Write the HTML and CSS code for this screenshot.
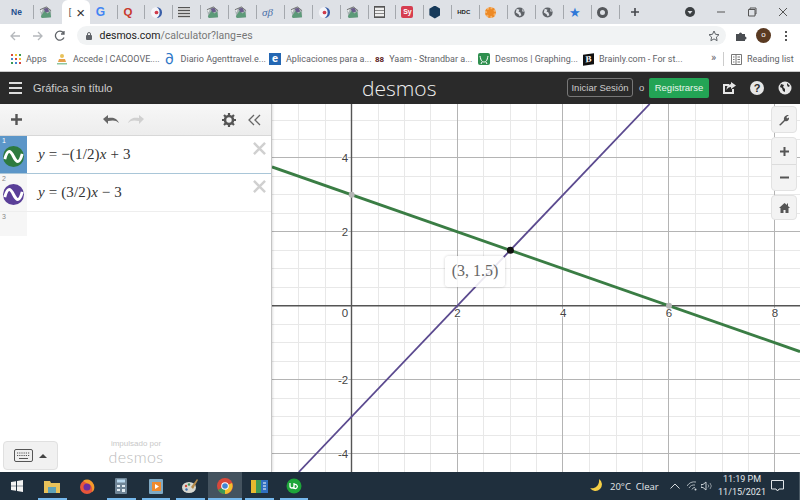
FILE: index.html
```html
<!DOCTYPE html>
<html lang="es">
<head>
<meta charset="UTF-8">
<title>Desmos | Calculadora Gráfica</title>
<link rel="stylesheet" href="styles.css">
</head>
<body>
<svg class="defs" width="0" height="0">
    <symbol id="pic" viewBox="0 0 14 14">
        <polygon points="1,4 8,1 13,5 13,12 3,13" fill="#a9b3b4"/>
        <polygon points="2,11 6,5 9,8 12,6 13,12 3,13" fill="#5c9a78"/>
        <polygon points="5,3 9,2 11,6 7,7" fill="#6a5c8a"/>
        <polygon points="1,4 4,3 3,7" fill="#eceeee"/>
        <path d="M1 4l7-3 5 4" fill="none" stroke="#555" stroke-width="0.8"/>
    </symbol>
    <symbol id="moon" viewBox="0 0 14 14">
        <circle cx="7" cy="7" r="6" fill="#f4f4f8"/>
        <path d="M7 1a6 6 0 0 1 0 12 7 7 0 0 0 0-12z" fill="#3a5fa8"/>
        <path d="M4 2a6 6 0 0 0-1 9 6 6 0 0 1 1-9z" fill="#e08a9a"/>
        <circle cx="7" cy="7" r="2" fill="#d03a4a"/>
    </symbol>
    <symbol id="globe" viewBox="0 0 14 14">
        <circle cx="7" cy="7" r="5.5" fill="#5f6368"/>
        <path d="M4 3l3 1-1 2 2 1 1 3-2 1-1-2-3-2zM10 3l2 3-2 0z" fill="#dee1e6"/>
    </symbol>
    <symbol id="curve" viewBox="0 0 24 24">
        <path d="M2 15c3-11 6-11 10-3s7 8 10-3" fill="none" stroke="#fff" stroke-width="3.4"/>
    </symbol>
    <symbol id="cross" viewBox="0 0 14 14">
        <path d="M1 1l12 12M13 1L1 13" stroke="#d0d0d0" stroke-width="2.6"/>
    </symbol>
</svg>

<div class="tabstrip">
    <div class="tab"><span class="ne">Ne</span></div>
    <div class="tab"><svg class="ico"><use href="#pic"/></svg></div>
    <div class="tab tab-active"><span class="tab-clip">[</span><span class="tab-x">×</span></div>
    <div class="tab"><span class="gg">G</span></div>
    <div class="tab"><span class="qq">Q</span></div>
    <div class="tab"><svg class="ico"><use href="#moon"/></svg></div>
    <div class="tab"><span class="lines"></span></div>
    <div class="tab"><svg class="ico"><use href="#pic"/></svg></div>
    <div class="tab"><svg class="ico"><use href="#pic"/></svg></div>
    <div class="tab"><span class="sigma">σβ</span></div>
    <div class="tab"><svg class="ico"><use href="#pic"/></svg></div>
    <div class="tab"><svg class="ico"><use href="#moon"/></svg></div>
    <div class="tab"><svg class="ico"><use href="#pic"/></svg></div>
    <div class="tab"><span class="grid-ico"></span></div>
    <div class="tab"><span class="sy">Sy</span></div>
    <div class="tab"><span class="hex"></span></div>
    <div class="tab"><span class="hdc">HDC</span></div>
    <div class="tab"><span class="sun"></span></div>
    <div class="tab"><svg class="ico"><use href="#globe"/></svg></div>
    <div class="tab"><svg class="ico"><use href="#globe"/></svg></div>
    <div class="tab"><span class="star">★</span></div>
    <div class="tab"><span class="ring"></span></div>
    <svg class="newtab" width="10" height="10" viewBox="0 0 10 10"><path d="M5 1v8M1 5h8" stroke="#45484d" stroke-width="1.6"/></svg>
    <svg class="tabsearch" width="12" height="12" viewBox="0 0 12 12"><circle cx="6" cy="6" r="5" fill="#3c4043"/><path d="M3.5 5h5L6 8z" fill="#dee1e6"/></svg>
    <div class="winbtns">
        <svg width="10" height="10" viewBox="0 0 10 10"><path d="M1 5h8" stroke="#555" stroke-width="1"/></svg>
        <svg width="10" height="10" viewBox="0 0 10 10"><path d="M1.5 2.5h6.5v6.5h-6.5zM3 2.5v-1.5h6v6h-1" fill="none" stroke="#555"/></svg>
        <svg width="10" height="10" viewBox="0 0 10 10"><path d="M1 1l8 8M9 1l-8 8" stroke="#555"/></svg>
    </div>
</div>

<div class="toolbar">
    <svg class="nav" width="12" height="12" viewBox="0 0 12 12"><path d="M11 6H2M6 2L2 6l4 4" fill="none" stroke="#b5b8bc" stroke-width="1.3"/></svg>
    <svg class="nav" width="12" height="12" viewBox="0 0 12 12"><path d="M1 6h9M6 2l4 4-4 4" fill="none" stroke="#b5b8bc" stroke-width="1.3"/></svg>
    <svg class="nav" width="12" height="12" viewBox="0 0 12 12"><path d="M10 7.5A4.5 4.5 0 1 1 9.5 3M10 1v3H7" fill="none" stroke="#5f6368" stroke-width="1.3"/></svg>
    <div class="omnibox">
        <svg width="8" height="10" viewBox="0 0 8 10"><rect x="1" y="4" width="6" height="5" rx="1" fill="#5f6368"/><path d="M2.5 4V3a1.5 1.5 0 0 1 3 0v1" fill="none" stroke="#5f6368"/></svg>
        <span class="url"><b>desmos.com</b>/calculator?lang=es</span>
        <svg class="omni-star" width="12" height="12" viewBox="0 0 12 12"><path d="M6 1l1.500 3.300 3.500.4-2.600 2.400.7 3.600L6 8.900l-3.100 1.800.7-3.600L1 4.700l3.500-.4z" fill="none" stroke="#5f6368"/></svg>
    </div>
    <svg class="puzzle" width="12" height="12" viewBox="0 0 12 12"><path d="M1 4h3a1.5 1.5 0 0 1 3 0h3v2.500a1.500 1.500 0 0 1 0 3V11H1z" fill="#4a4d51"/></svg>
    <span class="avatar">o</span>
    <span class="kebab"><i></i><i></i><i></i></span>
</div>

<div class="bookmarks">
    <span class="bm bm-apps">
        <svg width="10" height="10" viewBox="0 0 10 10">
            <path d="M0 0h2v2H0z" fill="#d8483b"/><path d="M4 0h2v2H4z" fill="#f1c02e"/><path d="M8 0h2v2H8z" fill="#3a9a55"/>
            <path d="M0 4h2v2H0z" fill="#4285d4"/><path d="M4 4h2v2H4z" fill="#d8483b"/><path d="M8 4h2v2H8z" fill="#f1c02e"/>
            <path d="M0 8h2v2H0z" fill="#3a9a55"/><path d="M4 8h2v2H4z" fill="#4285d4"/><path d="M8 8h2v2H8z" fill="#d8483b"/>
        </svg>Apps</span>
    <span class="bm bm-cacoo">
        <svg width="12" height="12" viewBox="0 0 12 12"><circle cx="6" cy="3" r="2" fill="#e8c25a"/><path d="M3 6h6l1 3H2z" fill="#e8a04a"/><path d="M1 10h10v1.500H1z" fill="#8fc7a0"/></svg>Accede | CACOOVE....</span>
    <span class="bm bm-diario"><span class="diario-ico">∂</span>Diario Agenttravel.e...</span>
    <span class="bm bm-apl"><span class="ie-ico">e</span>Aplicaciones para a...</span>
    <span class="bm bm-yaam"><span class="yaam-ico">88</span>Yaam - Strandbar a...</span>
    <span class="bm bm-desmos">
        <svg width="12" height="12" viewBox="0 0 12 12"><rect width="12" height="12" rx="2" fill="#2f8f4f"/><path d="M2 3c1 5 2 6 4 6s3-1 4-6M4 9l-1 2M8 9l1 2" fill="none" stroke="#fff"/></svg>Desmos | Graphing...</span>
    <span class="bm bm-brainly"><span class="br-ico">B</span>Brainly.com - For st...</span>
    <span class="bm-more">»</span>
    <span class="bm-sep"></span>
    <span class="bm bm-read">
        <svg width="11" height="11" viewBox="0 0 11 11"><path d="M.5.500h10v10H.5zM5 .5v10M2 3h1.500M2 5.500h1.500M2 8h1.500M6.500 3H9M6.500 5.500H9M6.500 8H9" fill="none" stroke="#777"/></svg>Reading list</span>
</div>

<header class="dcg-header">
    <span class="burger"><i></i><i></i><i></i></span>
    <span class="graph-title">Gráfica sin título</span>
    <span class="logo">desmos</span>
    <a class="btn-login">Iniciar Sesión</a>
    <span class="or">o</span>
    <a class="btn-signup">Registrarse</a>
    <svg class="hd-share" width="15" height="14" viewBox="0 0 15 14"><path d="M11 8v4H2V4h5" fill="none" stroke="#e6e6e6" stroke-width="2"/><path d="M9 1l5 3.500L9 8V6C7 6 5.500 7 4.500 9 4.500 6 6 3.500 9 3z" fill="#e6e6e6"/></svg>
    <span class="hd-help">?</span>
    <svg class="hd-globe" width="14" height="14" viewBox="0 0 14 14"><circle cx="7" cy="7" r="6.500" fill="#e6e6e6"/><path d="M3 3l3 1-1 2 2 2 0 3-2-1-1-3-2-1zM9 2l3 3-2 1-1-2z" fill="#2a2a2a"/></svg>
</header>

<main class="calc">
    <aside class="sidebar">
        <div class="side-tools">
            <svg class="t-plus" width="13" height="13" viewBox="0 0 13 13"><path d="M6.500 1v11M1 6.500h11" stroke="#555" stroke-width="2.400"/></svg>
            <svg class="t-undo" width="16" height="10" viewBox="0 0 16 10"><path d="M0 4l5-4v3c5-1 9 0 11 5-3-3-6-3-11-2v3z" fill="#666"/></svg>
            <svg class="t-redo" width="16" height="10" viewBox="0 0 16 10"><path d="M16 4l-5-4v3C6 2 2 3 0 8c3-3 6-3 11-2v3z" fill="#d0d0d0"/></svg>
            <svg class="t-gear" width="14" height="14" viewBox="0 0 14 14"><circle cx="7" cy="7" r="4" fill="none" stroke="#555" stroke-width="2.600"/><path d="M7 0v3M7 11v3M0 7h3M11 7h3M2 2l2 2M10 10l2 2M12 2l-2 2M4 10l-2 2" stroke="#555" stroke-width="2.200"/></svg>
            <svg class="t-hide" width="13" height="12" viewBox="0 0 13 12"><path d="M6 1L1 6l5 5M12 1L7 6l5 5" fill="none" stroke="#666" stroke-width="1.300"/></svg>
        </div>
        <div class="expr expr-active">
            <div class="expr-tab">
                <span class="expr-num">1</span>
                <svg class="expr-ico ico-green" viewBox="0 0 24 24"><use href="#curve"/></svg>
            </div>
            <div class="expr-math"><i>y</i> = −(1/2)<i>x</i> + 3</div>
            <svg class="expr-del" viewBox="0 0 14 14"><use href="#cross"/></svg>
        </div>
        <div class="expr">
            <div class="expr-tab">
                <span class="expr-num">2</span>
                <svg class="expr-ico ico-purple" viewBox="0 0 24 24"><use href="#curve"/></svg>
            </div>
            <div class="expr-math"><i>y</i> = (3/2)<i>x</i> − 3</div>
            <svg class="expr-del" viewBox="0 0 14 14"><use href="#cross"/></svg>
        </div>
        <div class="expr expr-empty">
            <div class="expr-tab"><span class="expr-num">3</span></div>
        </div>
        <div class="side-foot">
            <div class="kbd-btn">
                <svg width="19" height="13" viewBox="0 0 19 13"><rect x="0.500" y="0.500" width="18" height="12" rx="1.500" fill="#eee" stroke="#555"/><path d="M3 4h13M3 6.500h13" stroke="#555" stroke-dasharray="1.200 1"/><path d="M5 9.500h9" stroke="#555"/></svg>
                <span class="kbd-caret"></span>
            </div>
            <div class="powered">
                <span class="powered-by">impulsado por</span>
                <span class="powered-logo">desmos</span>
            </div>
        </div>
    </aside>

    <div class="graph">
        <svg class="plot" width="528" height="368" viewBox="0 0 528 368">
            <path class="grid-minor" d="M26.500 0v368M53.500 0v368M106.500 0v368M132.500 0v368M158.500 0v368M211.500 0v368M238.500 0v368M264.500 0v368M317.500 0v368M344.500 0v368M370.500 0v368M423.500 0v368M450.500 0v368M476.500 0v368M0 16.500h528M0 35.500h528M0 72.500h528M0 90.500h528M0 109.500h528M0 146.500h528M0 164.500h528M0 183.500h528M0 220.500h528M0 238.500h528M0 257.500h528M0 294.500h528M0 312.500h528M0 331.500h528"/>
            <path class="grid-major" d="M185.500 0v368M290.500 0v368M396.500 0v368M502.500 0v368M0 53.500h528M0 127.500h528M0 275.500h528M0 349.500h528"/>
            <path class="axis" d="M79.500 0v368M0 201.700h528"/>
            <g class="tick">
                <text x="73" y="57.500">4</text>
                <text x="73" y="131.500">2</text>
                <text x="73" y="213">0</text>
                <text x="185.500" y="213">2</text>
                <text x="291.300" y="213">4</text>
                <text x="397" y="213">6</text>
                <text x="503" y="213">8</text>
                <text x="71" y="279.500">-2</text>
                <text x="71" y="353.500">-4</text>
            </g>
            <path class="line-purple" d="M377.700 0L26.800 368"/>
            <path class="line-green" d="M0 62.900L528 247.600"/>
            <circle cx="79.700" cy="90.700" r="3" fill="#b5b5b5"/>
            <circle cx="397" cy="201.700" r="3" fill="#b5b5b5"/>
            <circle cx="238.400" cy="146.200" r="3.500" fill="#111"/>
        </svg>
        <div class="point-label">(3, 1.5)</div>
        <div class="gr-tools">
            <div class="gr-btn gr-wrench">
                <svg width="12" height="12" viewBox="0 0 12 12"><path d="M1 11l5-5C5.500 3 7.500 .5 11 1L8.500 3l.5 1.500L11 3.500C11.500 6 9 8 7 7l-4.500 4.500z" fill="#555"/></svg>
            </div>
            <div class="gr-zoom">
                <div class="gr-btn-inner"><svg width="9" height="9" viewBox="0 0 9 9"><path d="M4.500 0v9M0 4.500h9" stroke="#555" stroke-width="2"/></svg></div>
                <div class="gr-btn-inner"><svg width="9" height="9" viewBox="0 0 9 9"><path d="M0 4.500h9" stroke="#555" stroke-width="2"/></svg></div>
            </div>
            <div class="gr-btn gr-home">
                <svg width="11" height="10" viewBox="0 0 11 10"><path d="M5.500 0L0 5h1.500v5h3V7h2v3h3V5H11L9 3V.500H8v1.500z" fill="#555"/></svg>
            </div>
        </div>
    </div>
</main>

<footer class="taskbar">
    <svg class="win" width="12" height="12" viewBox="0 0 12 12"><path d="M0 2l5-.8V5.700H0zM6 1l6-1v5.700H6zM0 6.300h5v4.500L0 10zM6 6.300h6V12l-6-1z" fill="#f2f2f2"/></svg>
    <span class="tb tb-on"><svg width="16" height="13" viewBox="0 0 16 13"><path d="M0 1h6l1 2h9v10H0z" fill="#e8c25a"/><rect x="4" y="7" width="8" height="6" fill="#5fa3b8"/></svg></span>
    <span class="tb"><svg width="16" height="16" viewBox="0 0 16 16"><circle cx="8" cy="9" r="7" fill="#e8563a"/><path d="M4 3c4-3 9-1 11 4 1 3 0 6-2 7 1-4-1-8-4-8z" fill="#f39a2b"/><circle cx="8" cy="9" r="3.500" fill="#6a2fa0"/></svg></span>
    <span class="tb tb-on"><svg width="12" height="16" viewBox="0 0 12 16"><rect width="12" height="16" rx="1" fill="#6f8597"/><rect x="2" y="1.500" width="8" height="3" fill="#b8d8ee"/><path d="M2 7h3v2H2zM7 7h3v2H7zM2 11h3v2H2zM7 11h3v3H7z" fill="#e3edf3"/></svg></span>
    <span class="tb tb-on"><svg width="14" height="15" viewBox="0 0 14 15"><rect width="14" height="15" rx="1" fill="#7fa9c4"/><rect x="3" y="3" width="9" height="9" fill="#f08a2c"/><path d="M6 5l4 2.500L6 10z" fill="#fff"/></svg></span>
    <span class="tb tb-on"><svg width="16" height="16" viewBox="0 0 16 16"><ellipse cx="7" cy="9.500" rx="7" ry="5.500" fill="#d8d8d0"/><circle cx="4" cy="8" r="1.200" fill="#d04a3a"/><circle cx="7" cy="6.500" r="1.200" fill="#3f8f5a"/><circle cx="4.500" cy="11.500" r="1.200" fill="#3a6fb0"/><path d="M9 9l6-8 1 1-5 9z" fill="#b58a4a"/></svg></span>
    <span class="tb tb-on tb-active"><svg width="16" height="16" viewBox="0 0 16 16"><circle cx="8" cy="8" r="8" fill="#d8483b"/><path d="M8 8L1 12a8 8 0 0 0 7 4z" fill="#3a9a55"/><path d="M8 8l7-3a8 8 0 0 1-7 11z" fill="#f1c02e"/><circle cx="8" cy="8" r="3.800" fill="#fff"/><circle cx="8" cy="8" r="2.800" fill="#4285d4"/></svg></span>
    <span class="tb tb-on"><svg width="17" height="13" viewBox="0 0 17 13"><rect width="5" height="13" fill="#e8b92e"/><rect x="5" width="5" height="13" fill="#3f9a55"/><rect x="10" width="7" height="13" fill="#2f6fc0"/><path d="M12 3h3M12 6h3M12 9h3" stroke="#fff"/></svg></span>
    <span class="tb tb-on"><svg width="16" height="16" viewBox="0 0 16 16"><circle cx="8" cy="8" r="7.500" fill="#1ea53a"/><path d="M4 5v3a2 2 0 0 0 4 0V5M8 11V7a2 2 0 1 1 0 3" fill="none" stroke="#fff" stroke-width="1.300"/></svg></span>
    <div class="tray">
        <svg class="tray-moon" width="14" height="14" viewBox="0 0 14 14"><path d="M9 0a6.500 6.500 0 1 1-9 9c4 1.500 10-2 9-9z" fill="#f5cf45"/></svg>
        <span class="weather">20°C&nbsp; Clear</span>
        <svg class="tray-caret" width="10" height="6" viewBox="0 0 10 6"><path d="M.5 5.500L5 1l4.500 4.500" fill="none" stroke="#d5dade"/></svg>
        <svg class="tray-wifi" width="10" height="10" viewBox="0 0 10 10"><path d="M0 5a9 9 0 0 1 9-4M2 7a6 6 0 0 1 6-3M5 8.500a3 3 0 0 1 3-2" fill="none" stroke="#a9b2b9"/><circle cx="8.500" cy="8.500" r="1" fill="#d5dade"/></svg>
        <svg class="tray-vol" width="11" height="10" viewBox="0 0 11 10"><path d="M0 3.500h2L5 1v8L2 6.500H0z" fill="none" stroke="#c5ccd1"/><path d="M7 3.500a2 2 0 0 1 0 3M9 2a4.500 4.500 0 0 1 0 6" fill="none" stroke="#8a949b"/></svg>
        <div class="clock"><span>11:19 PM</span><span>11/15/2021</span></div>
        <svg class="tray-note" width="13" height="12" viewBox="0 0 13 12"><path d="M.5.500h12v8.500H8L6.500 11 5 9H.5z" fill="none" stroke="#e3e7ea"/></svg>
    </div>
</footer>
</body>
</html>
```

FILE: styles.css
```css
* {
    box-sizing: border-box;
}

html, body {
    margin: 0;
    width: 800px;
    height: 500px;
    overflow: hidden;
}

body {
    font-family: "Liberation Sans", Arial, sans-serif;
    background-color: #fff;
    display: flex;
    flex-direction: column;
}

.defs {
    position: absolute;
}

/* tabs */
.tabstrip {
    height: 24px;
    flex: none;
    background-color: #dee1e6;
    display: flex;
    align-items: center;
    padding-left: 6px;
}

.tab {
    width: 27.9px;
    height: 24px;
    flex: none;
    display: flex;
    align-items: center;
    padding-left: 5px;
    position: relative;
    font-size: 10px;
    color: #444;
}

.tab::after {
    content: "";
    position: absolute;
    right: 0;
    top: 5px;
    height: 14px;
    border-right: 1px solid #a4a8ad;
}

.tab:nth-child(2)::after,
.tab-active::after {
    display: none;
}

.tab-active {
    background-color: #fff;
    border-radius: 6px 6px 0 0;
    padding-left: 7px;
    gap: 5px;
    font-size: 9px;
}

.tab-x {
    font-size: 15px;
    color: #333;
}

.ico {
    width: 13px;
    height: 13px;
}

.ne {
    font-weight: bold;
    color: #1e4f8f;
    font-size: 8.5px;
}

.gg {
    color: #4285f4;
    font-size: 12px;
    font-weight: bold;
    margin-left: 1px;
}

.qq {
    font-weight: bold;
    color: #c8382c;
    font-size: 11.5px;
    margin-left: 1px;
}

.lines {
    width: 12px;
    height: 11px;
    background: repeating-linear-gradient(#555 0 1px, #ccc 1px 3px);
}

.sigma {
    font-family: "Liberation Serif", serif;
    font-style: italic;
    color: #4a6fa8;
    font-size: 11px;
}

.grid-ico {
    width: 11px;
    height: 12px;
    border: 1px solid #555;
    background: repeating-linear-gradient(#888 0 1px, #eee 1px 3px);
}

.sy {
    width: 12px;
    height: 12px;
    background-color: #d63d50;
    color: #fff;
    font-size: 7px;
    font-weight: bold;
    text-align: center;
    line-height: 12px;
    border-radius: 2px;
}

.hex {
    width: 11px;
    height: 13px;
    background-color: #173a5a;
    clip-path: polygon(50% 0, 100% 25%, 100% 75%, 50% 100%, 0 75%, 0 25%);
}

.hdc {
    font-size: 6px;
    font-weight: bold;
    color: #222;
}

.sun {
    width: 11px;
    height: 11px;
    background-color: #ed8a26;
    border-radius: 50%;
    border: 2px dotted #f5b26a;
}

.star {
    color: #2f78d8;
    font-size: 13px;
}

.ring {
    width: 11px;
    height: 11px;
    border-radius: 50%;
    border: 3px solid #55585c;
}

.newtab {
    margin-left: 10px;
}

.tabsearch {
    margin-left: 44px;
}

.winbtns {
    margin-left: 20px;
    display: flex;
    gap: 21px;
}

/* toolbar */
.toolbar {
    height: 23px;
    flex: none;
    background-color: #fff;
    display: flex;
    align-items: center;
    padding-left: 9px;
}

.nav {
    margin-right: 10.5px;
}

.omnibox {
    width: 649px;
    height: 19px;
    background-color: #f1f3f4;
    border-radius: 10px;
    display: flex;
    align-items: center;
    padding-left: 8px;
}

.url {
    margin-left: 7px;
    font-family: Roboto, sans-serif;
    font-size: 10.5px;
    color: #777;
}

.url b {
    font-weight: normal;
    color: #222;
}

.omni-star {
    margin-left: auto;
    margin-right: 6px;
}

.puzzle {
    margin-left: 9px;
}

.avatar {
    width: 15px;
    height: 15px;
    margin-left: 9.5px;
    border-radius: 50%;
    background-color: #5a3a22;
    color: #fff;
    font-size: 8px;
    text-align: center;
    line-height: 14px;
}

.kebab {
    margin-left: 13.5px;
    display: flex;
    flex-direction: column;
    gap: 2px;
}

.kebab i {
    width: 2px;
    height: 2px;
    background-color: #555;
}

/* bookmarks */
.bookmarks {
    height: 25px;
    flex: none;
    background-color: #fff;
    border-bottom: 1px solid #c9c9c9;
    display: flex;
    align-items: center;
    padding-left: 11px;
    font-family: Roboto, sans-serif;
    font-size: 9px;
    color: #5f6368;
}

.bm {
    flex: none;
    display: flex;
    align-items: center;
    gap: 5px;
    white-space: nowrap;
    height: 12px;
}

.bm-apps { width: 45px; }
.bm-cacoo { width: 109px; }
.bm-diario { width: 104px; }
.bm-apl { width: 106px; }
.bm-yaam { width: 103px; }
.bm-desmos { width: 105px; }
.bm-brainly { width: 128px; }
.bm-read { margin-left: 7px; }

.diario-ico {
    color: #2f78c8;
    font-size: 15px;
    line-height: 12px;
    margin-right: 2px;
}

.ie-ico {
    width: 12px;
    height: 12px;
    background-color: #2467b3;
    color: #fff;
    font-size: 11px;
    font-weight: bold;
    text-align: center;
    line-height: 11px;
}

.yaam-ico {
    font-size: 8px;
    font-weight: bold;
    color: #5a1a1a;
}

.br-ico {
    width: 11px;
    height: 11px;
    background-color: #111;
    color: #fff;
    font-family: "Liberation Serif", serif;
    font-size: 9px;
    font-weight: bold;
    text-align: center;
    line-height: 11px;
    transform: skewY(-8deg);
}

.bm-more {
    width: 12px;
    font-size: 11px;
    margin-bottom: 3px;
}

.bm-sep {
    height: 14px;
    border-left: 1px solid #ccc;
}

/* desmos header */
.dcg-header {
    height: 32px;
    flex: none;
    background-color: #2a2a2a;
    color: #ddd;
    display: flex;
    align-items: center;
    padding-bottom: 1px;
}

.burger {
    margin-left: 9px;
    width: 13px;
    display: flex;
    flex-direction: column;
    gap: 3px;
}

.burger i {
    height: 2px;
    background-color: #ddd;
}

.graph-title {
    margin-left: 11px;
    width: 329px;
    font-size: 11px;
    color: #ccc;
}

.logo {
    width: 205px;
    font-family: "Open Sans", sans-serif;
    font-weight: 300;
    font-size: 21px;
    color: #f0f0f0;
}

.btn-login {
    width: 66px;
    height: 19px;
    border: 1px solid #777;
    border-radius: 3px;
    font-size: 9.5px;
    text-align: center;
    line-height: 17px;
    color: #ccc;
}

.or {
    width: 10px;
    margin-left: 6px;
    font-size: 9.5px;
    color: #ccc;
}

.btn-signup {
    width: 60px;
    height: 20px;
    background-color: #23a455;
    border-radius: 2px;
    color: #e8f5ec;
    font-size: 9.5px;
    text-align: center;
    line-height: 20px;
}

.hd-share {
    margin-left: 13px;
}

.hd-help {
    margin-left: 13px;
    width: 14px;
    height: 14px;
    border-radius: 50%;
    background-color: #e6e6e6;
    color: #2a2a2a;
    font-weight: bold;
    font-size: 11px;
    text-align: center;
    line-height: 14px;
}

.hd-globe {
    margin-left: 14px;
}

/* calculator */
.calc {
    height: 368px;
    flex: none;
    display: flex;
}

.sidebar {
    width: 272px;
    flex: none;
    background-color: #fff;
    border-right: 1px solid #c4c4c4;
    display: flex;
    flex-direction: column;
    box-shadow: 1px 0 2px rgba(0, 0, 0, 0.12);
    z-index: 1;
}

.side-tools {
    height: 32px;
    flex: none;
    background: linear-gradient(#f7f7f7, #ededed);
    border-bottom: 1px solid #d8d8d8;
    display: flex;
    align-items: center;
    padding-left: 10px;
}

.t-undo { margin-left: 80px; }
.t-redo { margin-left: 9px; }
.t-gear { margin-left: 78px; }
.t-hide { margin-left: 12px; }

.expr {
    height: 38px;
    flex: none;
    display: flex;
    border-bottom: 1px solid #eee;
}

.expr-active {
    border-bottom: 1px solid #a9c6d8;
}

.expr-empty {
    height: 24px;
    border-bottom: none;
}

.expr-tab {
    width: 27px;
    flex: none;
    background-color: #f6f6f6;
    position: relative;
    display: flex;
    align-items: center;
    justify-content: center;
}

.expr-active .expr-tab {
    background-color: #5c96c8;
}

.expr-num {
    position: absolute;
    left: 2px;
    top: 1px;
    font-size: 7px;
    color: #888;
}

.expr-active .expr-num {
    color: #fff;
}

.expr-ico {
    width: 21px;
    height: 21px;
    border-radius: 50%;
    margin-top: 3px;
}

.ico-green {
    background-color: #2d7a3f;
}

.ico-purple {
    background-color: #5a3f98;
}

.expr-math {
    margin-left: 11px;
    padding-top: 10px;
    font-family: "Liberation Serif", serif;
    font-size: 15px;
    letter-spacing: 0.15px;
    color: #333;
    white-space: nowrap;
}

.expr-del {
    flex: none;
    margin: 6px 5px 0 auto;
    width: 13px;
    height: 13px;
}

.side-foot {
    flex: 1;
    display: flex;
    align-items: flex-end;
    padding: 0 0 2px 3px;
}

.kbd-btn {
    width: 55px;
    height: 29px;
    background-color: #f1f1f1;
    border: 1px solid #e0e0e0;
    border-radius: 4px;
    display: flex;
    align-items: center;
    gap: 6px;
    padding-left: 10px;
}

.kbd-caret {
    border-left: 4px solid transparent;
    border-right: 4px solid transparent;
    border-bottom: 4px solid #444;
}

.powered {
    margin: 0 0 4px 50px;
    width: 56px;
    display: flex;
    flex-direction: column;
    align-items: center;
    color: #c8c8c8;
}

.powered-by {
    font-size: 8px;
    line-height: 9px;
}

.powered-logo {
    font-family: Lato, sans-serif;
    font-size: 16px;
    line-height: 18px;
    font-weight: 300;
    letter-spacing: 0.4px;
    color: #bbb;
}

/* graph */
.graph {
    flex: 1;
    position: relative;
    background-color: #fff;
}

.plot {
    display: block;
}

.grid-minor {
    stroke: #e8e8e8;
    stroke-width: 1;
    fill: none;
}

.grid-major {
    stroke: #b4b4b4;
    stroke-width: 1;
    fill: none;
}

.axis {
    stroke: #555;
    stroke-width: 1.4;
    fill: none;
}

.tick text {
    font-size: 11.5px;
    fill: #444;
    text-anchor: middle;
    paint-order: stroke;
    stroke: #fff;
    stroke-width: 2px;
}

.line-purple {
    stroke: #5b4a8f;
    stroke-width: 1.8;
    fill: none;
}

.line-green {
    stroke: #3a7d44;
    stroke-width: 2.8;
    fill: none;
}

.point-label {
    position: absolute;
    left: 173px;
    top: 152px;
    width: 60px;
    height: 31px;
    background-color: rgba(255, 255, 255, 0.88);
    border-radius: 4px;
    box-shadow: 0 0 3px rgba(0, 0, 0, 0.2);
    font-family: "Liberation Serif", serif;
    font-size: 16px;
    color: #666;
    text-align: center;
    line-height: 30px;
}

.gr-tools {
    position: absolute;
    right: 3px;
    top: 2px;
    width: 26px;
    display: flex;
    flex-direction: column;
    gap: 4px;
}

.gr-btn, .gr-zoom {
    background-color: #f3f3f3;
    border: 1px solid #e2e2e2;
    border-radius: 4px;
}

.gr-btn {
    display: flex;
    align-items: center;
    justify-content: center;
}

.gr-wrench { height: 27px; }
.gr-home { height: 25px; }

.gr-btn-inner {
    height: 26px;
    display: flex;
    align-items: center;
    justify-content: center;
}

.gr-btn-inner + .gr-btn-inner {
    border-top: 1px solid #dcdcdc;
}

/* windows taskbar */
.taskbar {
    height: 28px;
    flex: none;
    background-color: #1f2f3d;
    display: flex;
    align-items: center;
    color: #e3e7ea;
}

.win {
    margin-left: 11px;
    margin-right: 12px;
}

.tb {
    width: 34.5px;
    height: 28px;
    flex: none;
    display: flex;
    align-items: center;
    justify-content: center;
    position: relative;
}

.tb-on::after {
    content: "";
    position: absolute;
    left: 3px;
    right: 3px;
    bottom: 0;
    height: 2px;
    background-color: #76b9ed;
}

.tb-active {
    background-color: #44535f;
}

.tb-active::after {
    left: 0;
    right: 0;
}

.tray {
    margin-left: auto;
    height: 28px;
    width: 210px;
    flex: none;
    display: flex;
    align-items: center;
    border-right: 1px solid #4a5964;
}

.weather {
    width: 54px;
    margin-left: 6px;
    white-space: nowrap;
    font-size: 9.5px;
    font-family: "Open Sans", sans-serif;
}

.tray-caret { margin-left: 6px; }
.tray-wifi { margin-left: 7px; }
.tray-vol { margin-left: 4px; }

.clock {
    width: 58px;
    margin-left: 1px;
    display: flex;
    flex-direction: column;
    align-items: center;
    font-family: Roboto, sans-serif;
    font-size: 9px;
    line-height: 13px;
}
```
